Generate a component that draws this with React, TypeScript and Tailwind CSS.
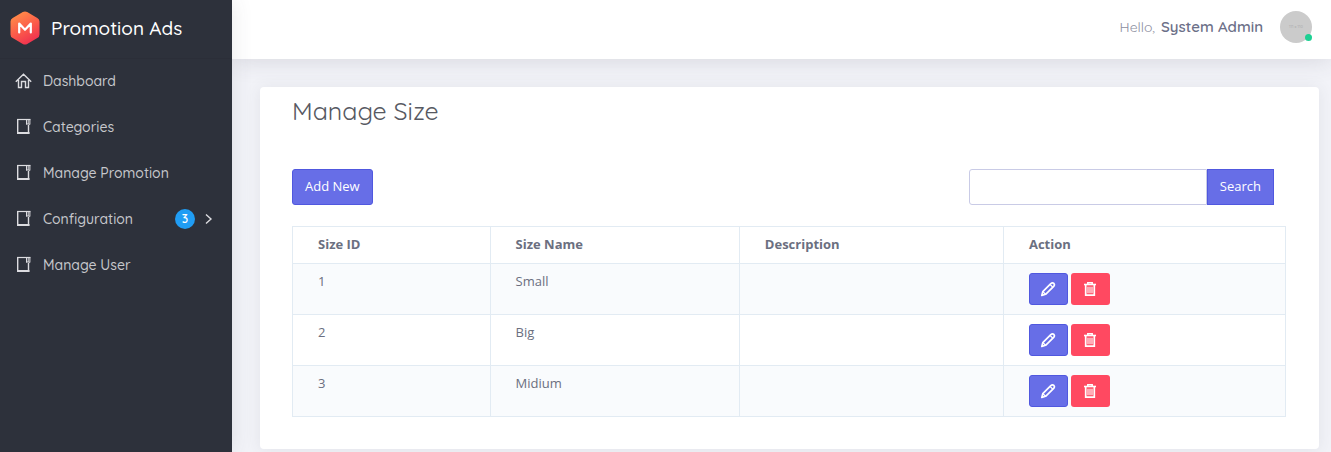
import React from "react";

const display = "font-['Quicksand','Lato',sans-serif]";

function LogoIcon() {
  return (
    <svg viewBox="0 0 30 34" className="h-[34px] w-[30px]" aria-hidden="true">
      <defs>
        <linearGradient id="brand" x1="0.2" y1="0" x2="0.7" y2="1">
          <stop offset="0" stopColor="#ff9048" />
          <stop offset="0.55" stopColor="#fb5a4a" />
          <stop offset="1" stopColor="#ee2e50" />
        </linearGradient>
      </defs>
      <path
        d="M12.8 1.1Q15 0 17.2 1.1L27.3 7Q29.5 8.2 29.5 10.6V23.4Q29.5 25.8 27.3 27L17.2 32.9Q15 34 12.8 32.9L2.7 27Q.5 25.8 .5 23.4V10.6Q.5 8.2 2.7 7Z"
        fill="url(#brand)"
      />
      <path
        d="M9.2 21.5V12.6L15 18.8L20.8 12.6V21.5"
        fill="none"
        stroke="#fff"
        strokeWidth="2.2"
        strokeLinecap="round"
        strokeLinejoin="round"
      />
    </svg>
  );
}

function HomeIcon() {
  return (
    <svg viewBox="0 0 17 17" className="mb-[3px] h-[17px] w-[17px]" fill="none" stroke="#dcdce0" strokeWidth="1.4" aria-hidden="true">
      <path d="M.8 9.8L8.5 2.3L16.2 9.8M3.5 8V15.5H6.5V9.5H10.5V15.5H13.5V8" />
    </svg>
  );
}

function BookIcon() {
  return (
    <svg viewBox="0 0 17 17" className="mb-[2px] h-[17px] w-[17px]" fill="none" stroke="#dcdce0" aria-hidden="true">
      <path d="M2.7 1V16" strokeWidth="1.4" />
      <path d="M2 1.5H15.5" strokeWidth="1.2" />
      <path d="M2 15H14.5" strokeWidth="2" />
      <path d="M13.5 6.5V16" strokeWidth="1.4" />
      <path d="M11.5 1.5V6.5L13.2 5.5L14.9 6.5V1.5M13.2 1.5V5.5" strokeWidth="1" />
    </svg>
  );
}

function PencilIcon() {
  return (
    <svg viewBox="0 0 16 16" className="h-4 w-4" fill="none" stroke="#fff" strokeWidth="1.7" strokeLinejoin="round" aria-hidden="true">
      <path d="M1.8 14.4L2.8 10.6L10.8 2.7Q12.4 1.3 13.9 2.5Q15 3.8 13.7 5.4L5.6 13.3Z" />
      <path d="M10.2 3.6L12.7 6M2.8 10.6L5.6 13.3" strokeWidth="1.3" />
    </svg>
  );
}

function TrashIcon() {
  return (
    <svg viewBox="0 0 16 16" className="h-4 w-4" fill="none" stroke="#fff" aria-hidden="true">
      <path d="M2 3.5H14" strokeWidth="1.6" />
      <path d="M5.8 3.3V1.8H10.2V3.3" strokeWidth="1.5" />
      <path d="M3.7 4V14.2H12.3V4" strokeWidth="1.7" />
      <path d="M6 5.8V12.2M8 5.8V12.2M10 5.8V12.2" strokeWidth="1.1" />
    </svg>
  );
}

const items = [
  { label: "Dashboard", home: true },
  { label: "Categories" },
  { label: "Manage Promotion" },
  { label: "Configuration", count: 3 },
  { label: "Manage User" },
];

const rows = [
  { id: 1, name: "Small" },
  { id: 2, name: "Big" },
  { id: 3, name: "Midium" },
];

const cell = "border border-[#e2ebf3] px-[25px] pb-[10px] pt-2 text-left align-top leading-[18px]";
const primary = "border border-[#5058df] bg-[#676ee7] text-white";

export default function App() {
  return (
    <div className="flex min-h-screen bg-[#f2f3f8] font-['Open_Sans',sans-serif] text-[13px] text-[#6b6f80]">
      <aside className={`z-20 w-[232px] shrink-0 bg-[#2d313b] shadow-[0_0_20px_rgba(69,65,78,0.12)] ${display}`}>
        <a href="#" className="flex h-[58px] items-center gap-[11px] pb-[2px] pl-[10px] text-[19px] font-medium text-white">
          <LogoIcon />
          <span>Promotion Ads</span>
        </a>
        <nav className="border-t border-[#2b2e38]">
          <ul>
            {items.map((item) => (
              <li key={item.label}>
                <a href="#" className="flex h-[46px] items-center pb-px pl-[15px] pr-[18px] text-[14px] font-medium text-[#c6c7cb]">
                  {item.home ? <HomeIcon /> : <BookIcon />}
                  <span className="ml-[11px] grow">{item.label}</span>
                  {item.count && (
                    <>
                      <span className="mb-[2px] mr-[9px] flex h-5 w-5 items-center justify-center rounded-full bg-[#209df4] text-[12px] font-semibold text-white">
                        {item.count}
                      </span>
                      <svg viewBox="0 0 10 12" className="mb-[2px] h-3 w-[10px]" fill="none" stroke="#dcdce0" strokeWidth="1.4" aria-hidden="true">
                        <path d="M2 1.5L7 6L2 10.5" />
                      </svg>
                    </>
                  )}
                </a>
              </li>
            ))}
          </ul>
        </nav>
      </aside>

      <div className="flex min-w-0 grow flex-col">
        <header className={`z-10 flex h-[59px] items-center justify-end bg-white pb-[5px] pr-[19px] shadow-[0_1px_24px_rgba(69,65,78,0.16)] ${display}`}>
          <span className="text-[14px] text-[#8c8ea0]">Hello,</span>
          <span className="ml-[6px] text-[15px] font-semibold text-[#6c7088]">System Admin</span>
          <span className="relative ml-[17px] flex h-8 w-8 items-center justify-center rounded-full bg-[#cbcbcb] text-[4px] text-[#a5a5a5]">
            111 x 110
            <span className="absolute bottom-[2px] right-0 h-[7px] w-[7px] rounded-full bg-[#1dd093]" />
          </span>
        </header>

        <main className="pb-[3px] pl-7 pr-3 pt-7">
          <section className="rounded bg-white px-8 pb-8 pt-[7px] shadow-[0_1px_15px_1px_rgba(69,65,78,0.08)]">
            <h1 className={`text-[25px] font-normal leading-[34px] text-[#575962] ${display}`}>Manage Size</h1>
            <div className="mt-[41px] flex items-start justify-between pr-[13px]">
              <button type="button" className={`h-9 rounded-[3px] px-3 font-medium ${primary}`}>Add New</button>
              <form className="flex" onSubmit={(e) => e.preventDefault()}>
                <input
                  type="text"
                  aria-label="Search sizes"
                  className="h-9 w-[238px] rounded-l-[3px] border border-[#c9cbe6] bg-white px-3 outline-none"
                />
                <button type="submit" className={`h-9 px-3 font-medium ${primary}`}>Search</button>
              </form>
            </div>
            <div className="mt-[21px] pr-px">
              <table className="w-full table-fixed border-collapse">
                <thead>
                  <tr>
                    <th className={`${cell} w-[19.9%]`}>Size ID</th>
                    <th className={`${cell} w-[25.1%]`}>Size Name</th>
                    <th className={`${cell} w-[26.6%]`}>Description</th>
                    <th className={cell}>Action</th>
                  </tr>
                </thead>
                <tbody>
                  {rows.map((row) => (
                    <tr key={row.id} className="odd:bg-[#f9fbfd]">
                      <td className={cell}>{row.id}</td>
                      <td className={cell}>{row.name}</td>
                      <td className={cell}></td>
                      <td className="border border-[#e2ebf3] px-[25px] py-[9px] align-top">
                        <div className="flex gap-[3px]">
                          <button type="button" aria-label="Edit" className={`flex h-8 w-[39px] items-center justify-center rounded-[3px] ${primary}`}>
                            <PencilIcon />
                          </button>
                          <button type="button" aria-label="Delete" className="flex h-8 w-[39px] items-center justify-center rounded-[3px] bg-[#ff4961]">
                            <TrashIcon />
                          </button>
                        </div>
                      </td>
                    </tr>
                  ))}
                </tbody>
              </table>
            </div>
          </section>
        </main>
      </div>
    </div>
  );
}
